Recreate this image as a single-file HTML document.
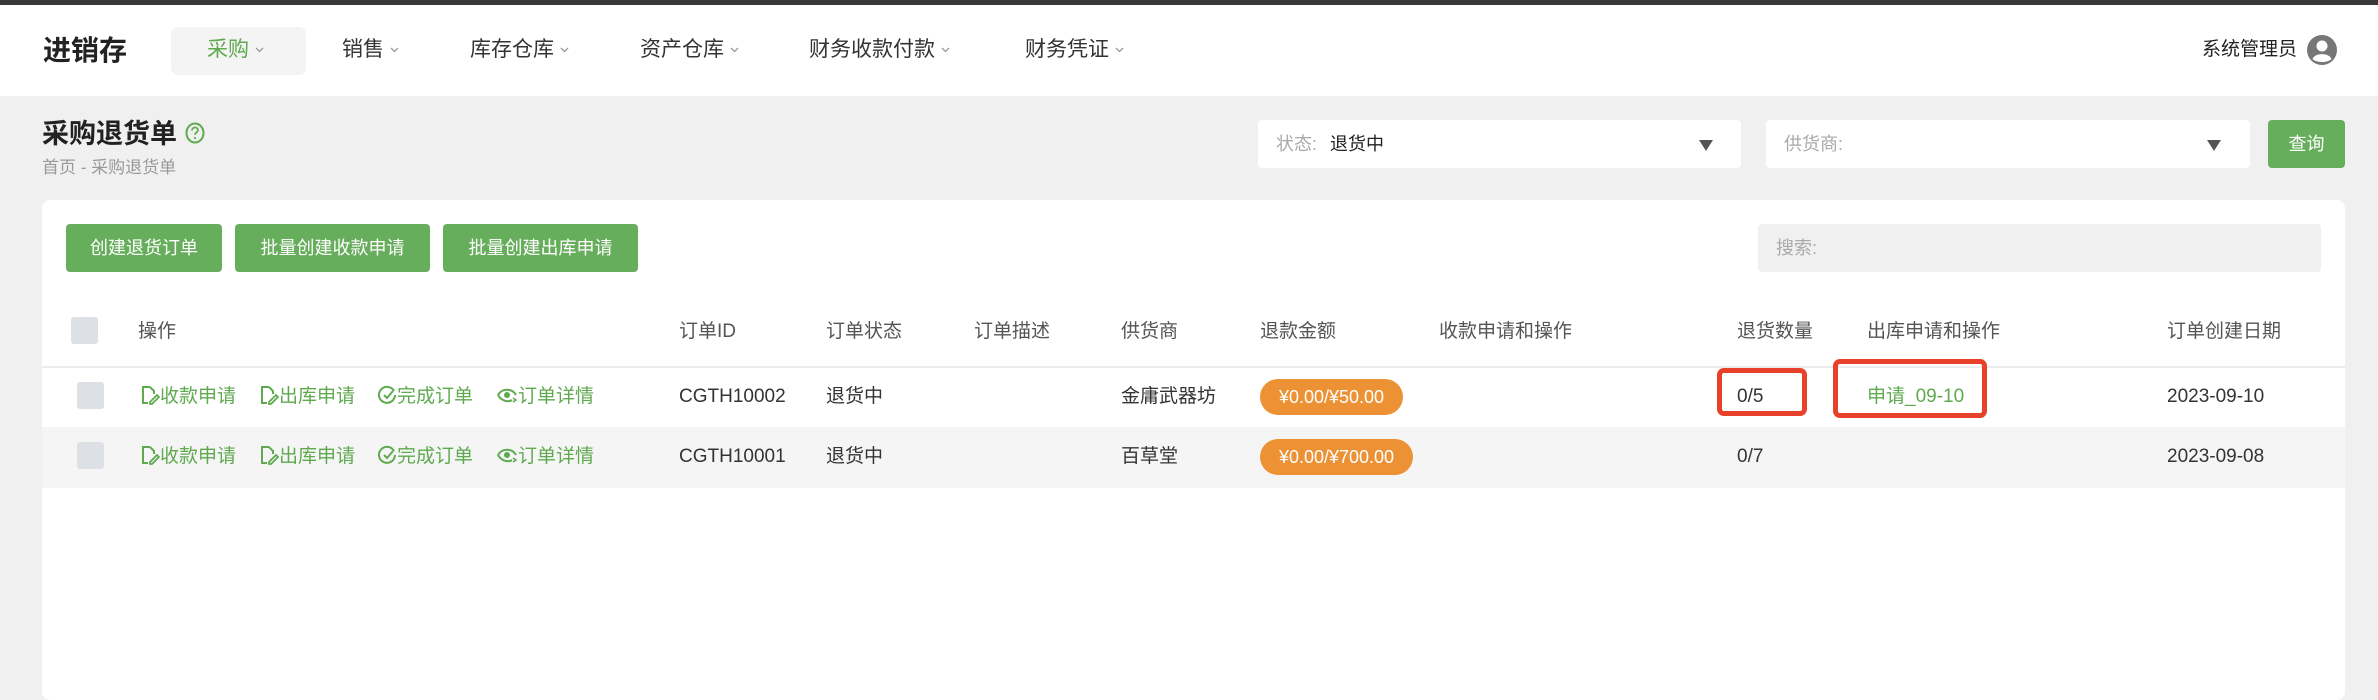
<!DOCTYPE html>
<html><head><meta charset="utf-8"><style>
*{margin:0;padding:0;box-sizing:border-box}
body{width:2378px;height:684px;overflow:hidden;background:#f0f0f0;font-family:"Liberation Sans","Noto Sans CJK SC",sans-serif;position:relative;color:#333}
.a{position:absolute;white-space:nowrap}
.top{left:0;top:0;width:2378px;height:5px;background:#383838}
.hdr{left:0;top:5px;width:2378px;height:91px;background:#fff}
.nav{font-size:21px;color:#333;top:36px;line-height:28px}
.car{display:inline-block;margin-left:6px;vertical-align:3px}
.btn{background:#67ae5c;color:#fff;border-radius:4px;font-size:18px;text-align:center;line-height:48px;height:48px;top:224px}
.th{font-size:19px;color:#555;top:320px;line-height:24px}
.td{font-size:19px;color:#333;line-height:24px}
.lk{font-size:19px;color:#5faa4f;line-height:24px}
.cb{width:27px;height:27px;background:#dde0e4;border-radius:3px}
.badge{background:#ec9235;color:#fff;font-size:18px;border-radius:18px;height:36px;line-height:36px;text-align:center}
.red{border:5px solid #e8412a;border-radius:7px}
svg{vertical-align:-3px}
.arr{width:0;height:0;border-left:7px solid transparent;border-right:7px solid transparent;border-top:11px solid #555}
</style></head><body>
<div class="a top"></div>
<div class="a hdr"></div>
<div class="a" style="left:43px;top:33px;font-size:28px;font-weight:bold;color:#222;line-height:36px">进销存</div>
<div class="a" style="left:171px;top:27px;width:135px;height:48px;background:#f4f4f4;border-radius:7px"></div>
<div class="a nav" style="left:207px;color:#5faa4f">采购<svg class="car" width="9" height="6" viewBox="0 0 9 6"><path d="M1 1l3.5 3.5L8 1" fill="none" stroke="#999" stroke-width="1.3"/></svg></div>
<div class="a nav" style="left:342px">销售<svg class="car" width="9" height="6" viewBox="0 0 9 6"><path d="M1 1l3.5 3.5L8 1" fill="none" stroke="#999" stroke-width="1.3"/></svg></div>
<div class="a nav" style="left:470px">库存仓库<svg class="car" width="9" height="6" viewBox="0 0 9 6"><path d="M1 1l3.5 3.5L8 1" fill="none" stroke="#999" stroke-width="1.3"/></svg></div>
<div class="a nav" style="left:640px">资产仓库<svg class="car" width="9" height="6" viewBox="0 0 9 6"><path d="M1 1l3.5 3.5L8 1" fill="none" stroke="#999" stroke-width="1.3"/></svg></div>
<div class="a nav" style="left:809px">财务收款付款<svg class="car" width="9" height="6" viewBox="0 0 9 6"><path d="M1 1l3.5 3.5L8 1" fill="none" stroke="#999" stroke-width="1.3"/></svg></div>
<div class="a nav" style="left:1025px">财务凭证<svg class="car" width="9" height="6" viewBox="0 0 9 6"><path d="M1 1l3.5 3.5L8 1" fill="none" stroke="#999" stroke-width="1.3"/></svg></div>
<div class="a" style="left:2202px;top:37px;font-size:19px;color:#222;line-height:26px">系统管理员</div>
<svg class="a" style="left:2307px;top:35px" width="30" height="30" viewBox="0 0 30 30"><circle cx="15" cy="15" r="15" fill="#777"/><circle cx="15" cy="11" r="5.5" fill="#fff"/><path d="M5.5 24 C8 17.5 22 17.5 24.5 24 C20 28 10 28 5.5 24Z" fill="#fff"/></svg>

<div class="a" style="left:42px;top:117px;font-size:27px;font-weight:bold;color:#222;line-height:34px">采购退货单</div>
<svg class="a" style="left:185px;top:122px" width="20" height="22" viewBox="0 0 20 22"><ellipse cx="10" cy="11" rx="8.5" ry="9.5" fill="none" stroke="#5faa4f" stroke-width="2"/><path d="M7 8.5c0-2 1.5-3 3-3s3 1 3 2.8c0 2-3 2.2-3 4.5" fill="none" stroke="#5faa4f" stroke-width="1.8"/><circle cx="10" cy="16" r="1.1" fill="#5faa4f"/></svg>
<div class="a" style="left:42px;top:157px;font-size:17px;color:#999;line-height:22px">首页 - 采购退货单</div>

<div class="a" style="left:1258px;top:120px;width:483px;height:48px;background:#fff;border-radius:4px"></div>
<div class="a" style="left:1276px;top:132px;font-size:18px;color:#aaa;line-height:24px">状态: <span style="color:#222;margin-left:8px">退货中</span></div>
<div class="a arr" style="left:1699px;top:140px"></div>
<div class="a" style="left:1766px;top:120px;width:484px;height:48px;background:#fff;border-radius:4px"></div>
<div class="a" style="left:1784px;top:132px;font-size:18px;color:#aaa;line-height:24px">供货商:</div>
<div class="a arr" style="left:2207px;top:140px"></div>
<div class="a btn" style="left:2268px;top:120px;width:77px">查询</div>

<div class="a" style="left:42px;top:200px;width:2303px;height:500px;background:#fff;border-radius:8px"></div>
<div class="a btn" style="left:66px;width:156px">创建退货订单</div>
<div class="a btn" style="left:235px;width:195px">批量创建收款申请</div>
<div class="a btn" style="left:443px;width:195px">批量创建出库申请</div>
<div class="a" style="left:1758px;top:224px;width:563px;height:48px;background:#f0f0f0;border-radius:4px"></div>
<div class="a" style="left:1776px;top:236px;font-size:18px;color:#aaa;line-height:24px">搜索:</div>

<div class="a cb" style="left:71px;top:317px"></div>
<div class="a th" style="left:138px">操作</div>
<div class="a th" style="left:679px">订单ID</div>
<div class="a th" style="left:826px">订单状态</div>
<div class="a th" style="left:974px">订单描述</div>
<div class="a th" style="left:1121px">供货商</div>
<div class="a th" style="left:1260px">退款金额</div>
<div class="a th" style="left:1439px">收款申请和操作</div>
<div class="a th" style="left:1737px">退货数量</div>
<div class="a th" style="left:1867px">出库申请和操作</div>
<div class="a th" style="left:2167px">订单创建日期</div>
<div class="a" style="left:42px;top:366px;width:2303px;height:2px;background:#ececec"></div>

<div class="a" style="left:42px;top:427px;width:2303px;height:61px;background:#f5f5f5"></div>

<div class="a cb" style="left:77px;top:382px"></div>
<div class="a cb" style="left:77px;top:442px"></div>

<div class="a lk" style="left:141px;top:385px"><svg width="19" height="20" viewBox="0 0 19 20"><path d="M9 2H2v16h5M9 2l4 4v3" fill="none" stroke="#5faa4f" stroke-width="2"/><path d="M9 17l7-7 2 2-7 7H9z" fill="none" stroke="#5faa4f" stroke-width="1.8"/></svg>收款申请</div>
<div class="a lk" style="left:260px;top:385px"><svg width="19" height="20" viewBox="0 0 19 20"><path d="M9 2H2v16h5M9 2l4 4v3" fill="none" stroke="#5faa4f" stroke-width="2"/><path d="M9 17l7-7 2 2-7 7H9z" fill="none" stroke="#5faa4f" stroke-width="1.8"/></svg>出库申请</div>
<div class="a lk" style="left:378px;top:385px"><svg width="19" height="20" viewBox="0 0 19 20"><path d="M16 6A8 8 0 1 0 17 10" fill="none" stroke="#5faa4f" stroke-width="2"/><path d="M6 10l3 3 6-7" fill="none" stroke="#5faa4f" stroke-width="2"/></svg>完成订单</div>
<div class="a lk" style="left:497px;top:385px"><svg width="21" height="20" viewBox="0 0 21 20"><path d="M1 10C5 3 15 3 19 10" fill="none" stroke="#5faa4f" stroke-width="2"/><path d="M1 10C5 17 12 17 15 15" fill="none" stroke="#5faa4f" stroke-width="2"/><circle cx="10" cy="10" r="3" fill="#5faa4f"/><path d="M16 13l3 2-3 2" fill="none" stroke="#5faa4f" stroke-width="1.6"/></svg>订单详情</div>

<div class="a lk" style="left:141px;top:445px"><svg width="19" height="20" viewBox="0 0 19 20"><path d="M9 2H2v16h5M9 2l4 4v3" fill="none" stroke="#5faa4f" stroke-width="2"/><path d="M9 17l7-7 2 2-7 7H9z" fill="none" stroke="#5faa4f" stroke-width="1.8"/></svg>收款申请</div>
<div class="a lk" style="left:260px;top:445px"><svg width="19" height="20" viewBox="0 0 19 20"><path d="M9 2H2v16h5M9 2l4 4v3" fill="none" stroke="#5faa4f" stroke-width="2"/><path d="M9 17l7-7 2 2-7 7H9z" fill="none" stroke="#5faa4f" stroke-width="1.8"/></svg>出库申请</div>
<div class="a lk" style="left:378px;top:445px"><svg width="19" height="20" viewBox="0 0 19 20"><path d="M16 6A8 8 0 1 0 17 10" fill="none" stroke="#5faa4f" stroke-width="2"/><path d="M6 10l3 3 6-7" fill="none" stroke="#5faa4f" stroke-width="2"/></svg>完成订单</div>
<div class="a lk" style="left:497px;top:445px"><svg width="21" height="20" viewBox="0 0 21 20"><path d="M1 10C5 3 15 3 19 10" fill="none" stroke="#5faa4f" stroke-width="2"/><path d="M1 10C5 17 12 17 15 15" fill="none" stroke="#5faa4f" stroke-width="2"/><circle cx="10" cy="10" r="3" fill="#5faa4f"/><path d="M16 13l3 2-3 2" fill="none" stroke="#5faa4f" stroke-width="1.6"/></svg>订单详情</div>

<div class="a td" style="left:679px;top:385px">CGTH10002</div>
<div class="a td" style="left:826px;top:385px">退货中</div>
<div class="a td" style="left:1121px;top:385px">金庸武器坊</div>
<div class="a badge" style="left:1260px;top:379px;width:143px">¥0.00/¥50.00</div>
<div class="a td" style="left:1737px;top:385px">0/5</div>
<div class="a lk" style="left:1867px;top:385px">申请_09-10</div>
<div class="a td" style="left:2167px;top:385px">2023-09-10</div>

<div class="a td" style="left:679px;top:445px">CGTH10001</div>
<div class="a td" style="left:826px;top:445px">退货中</div>
<div class="a td" style="left:1121px;top:445px">百草堂</div>
<div class="a badge" style="left:1260px;top:439px;width:153px">¥0.00/¥700.00</div>
<div class="a td" style="left:1737px;top:445px">0/7</div>
<div class="a td" style="left:2167px;top:445px">2023-09-08</div>

<div class="a red" style="left:1717px;top:368px;width:90px;height:48px"></div>
<div class="a red" style="left:1833px;top:359px;width:154px;height:59px"></div>
</body></html>
